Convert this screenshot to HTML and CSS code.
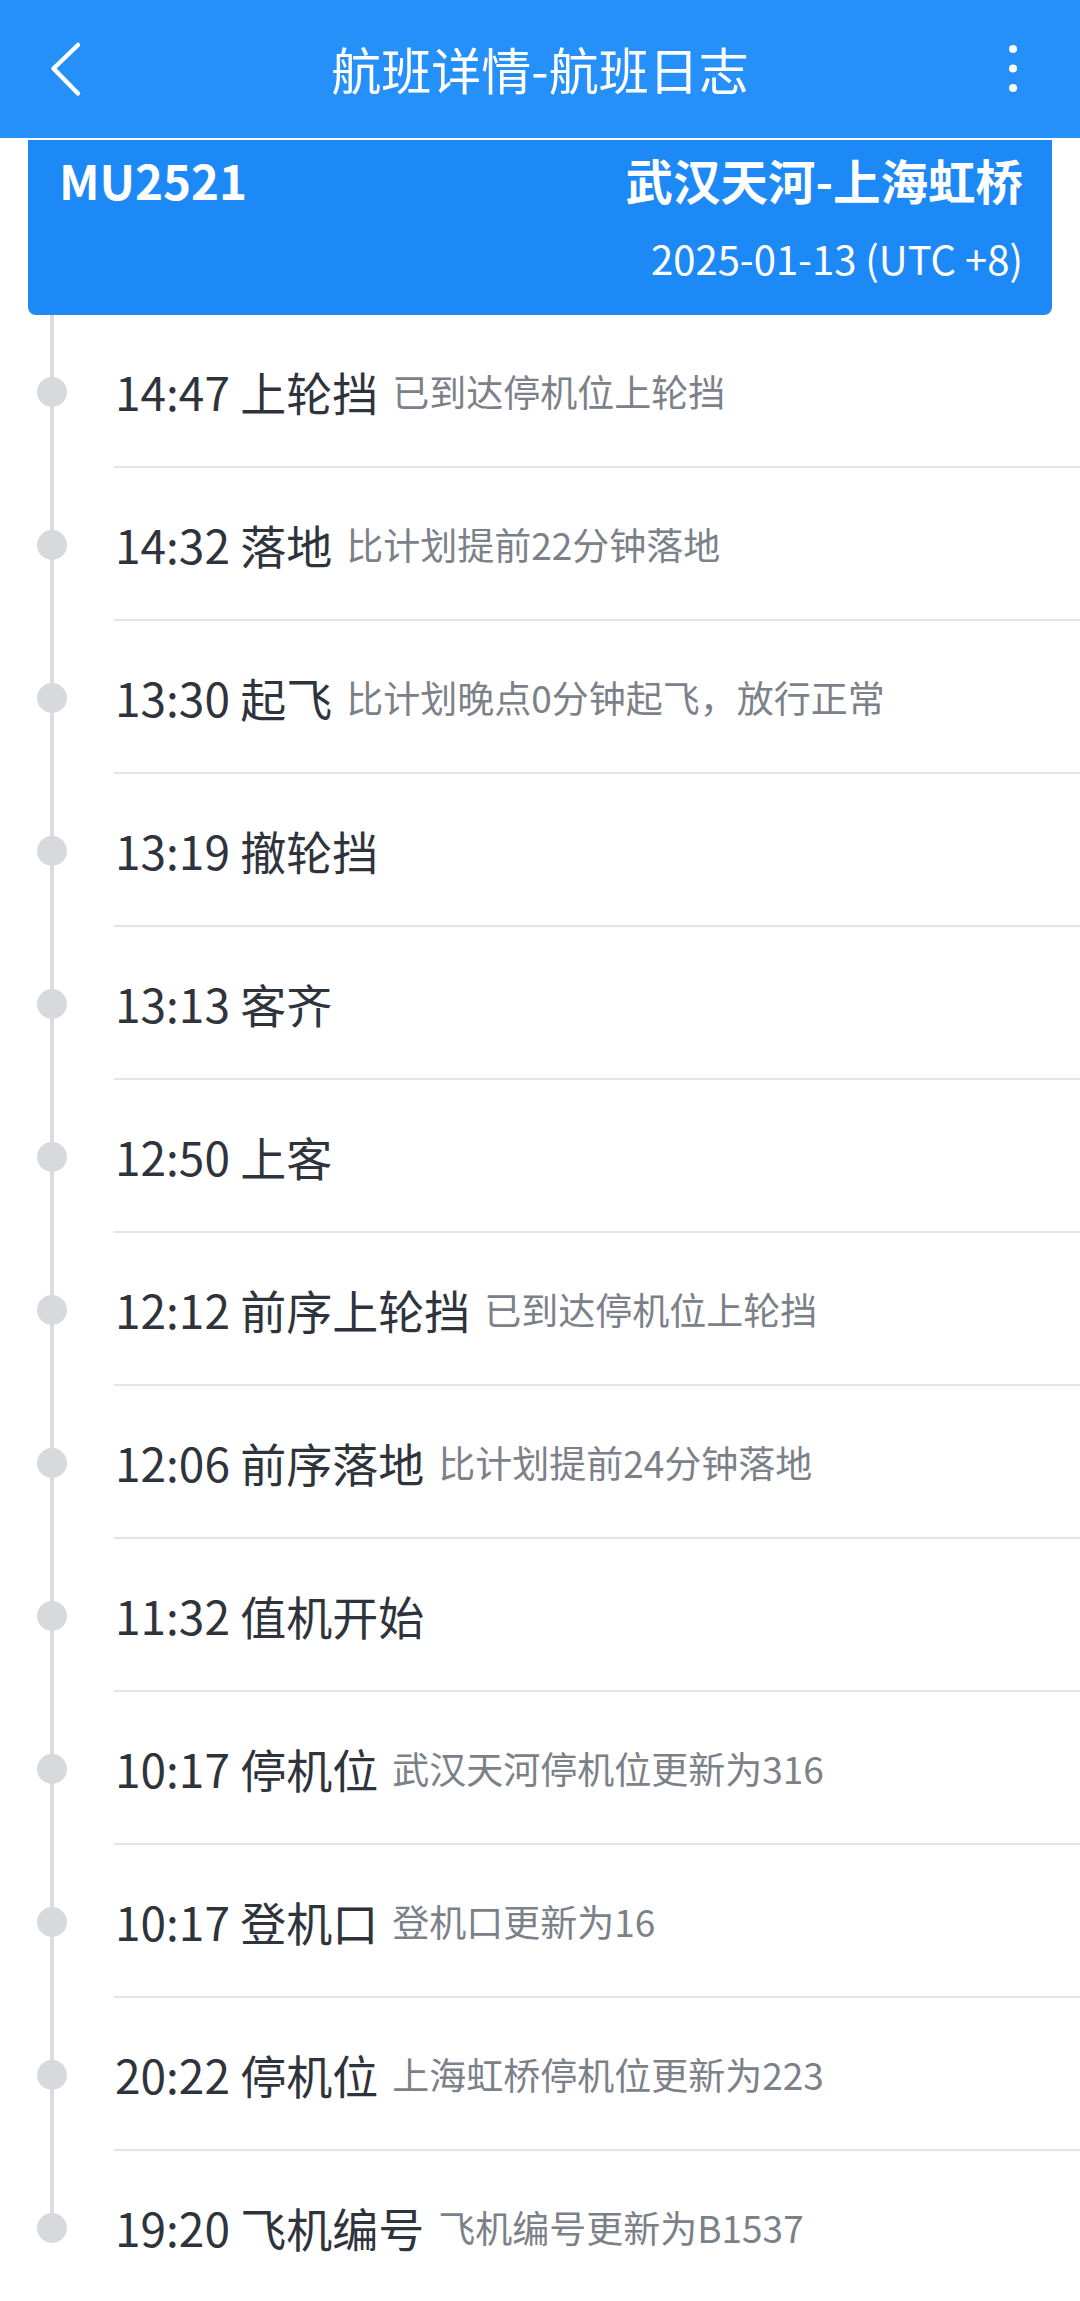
FILE: index.html
```html
<!DOCTYPE html>
<html lang="zh-CN">
<head>
  <meta charset="UTF-8" />
  <meta name="viewport" content="width=device-width, initial-scale=1.0" />
  <title>航班详情-航班日志</title>
  <link rel="stylesheet" href="styles.css">
</head>
<body>
  <div class="topbar">
    <div class="back">
      <svg width="32" height="58" viewBox="0 0 32 58"><path d="M28 5 L3.5 28.5 L28 53.5" fill="none" stroke="#fff" stroke-width="4.5" stroke-linecap="round" stroke-linejoin="round"/></svg>
    </div>
    <div class="title">航班详情-航班日志</div>
    <div class="more">
      <svg width="10" height="50" viewBox="0 0 10 50"><circle cx="5" cy="5" r="4" fill="#fff"/><circle cx="5" cy="24.5" r="4" fill="#fff"/><circle cx="5" cy="44" r="4" fill="#fff"/></svg>
    </div>
  </div>

  <div class="card">
    <div class="flight-no">MU2521</div>
    <div class="card-right">
      <div class="route">武汉天河-上海虹桥</div>
      <div class="date">2025-01-13 (UTC +8)</div>
    </div>
  </div>

  <ul class="timeline" id="timeline"></ul>

  <script>
    const logs = [
      ["14:47", "上轮挡", "已到达停机位上轮挡"],
      ["14:32", "落地", "比计划提前22分钟落地"],
      ["13:30", "起飞", "比计划晚点0分钟起飞，放行正常"],
      ["13:19", "撤轮挡", ""],
      ["13:13", "客齐", ""],
      ["12:50", "上客", ""],
      ["12:12", "前序上轮挡", "已到达停机位上轮挡"],
      ["12:06", "前序落地", "比计划提前24分钟落地"],
      ["11:32", "值机开始", ""],
      ["10:17", "停机位", "武汉天河停机位更新为316"],
      ["10:17", "登机口", "登机口更新为16"],
      ["20:22", "停机位", "上海虹桥停机位更新为223"],
      ["19:20", "飞机编号", "飞机编号更新为B1537"]
    ];

    const list = document.getElementById("timeline");
    logs.forEach(([time, name, desc]) => {
      const li = document.createElement("li");
      li.className = "log";
      li.innerHTML = `
        <div class="rail"><span class="dot"></span></div>
        <div class="log-body">
          <span class="log-main">${time} ${name}</span>
          ${desc ? `<span class="log-desc">${desc}</span>` : ""}
        </div>
      `;
      list.appendChild(li);
    });
  </script>
</body>
</html>
```

FILE: styles.css
```css
body {
  margin: 0;
  background: #fff;
  font-family: "Noto Sans CJK SC", "Noto Sans", sans-serif;
  color: #2f343c;
}

.topbar {
  height: 138px;
  background: #2590f9;
  display: grid;
  grid-template-columns: 1fr auto 1fr;
  align-items: center;
  color: #fff;
}
.back { padding-left: 50px; display: flex; }
.more { justify-self: end; padding-right: 62px; display: flex; }
.title { font-size: 50px; line-height: 1; margin-top: -2px; }

.card {
  box-sizing: border-box;
  height: 175px;
  margin: 2px 28px 0;
  padding: 12px 29px 0 31px;
  background: #1d89f6;
  border-radius: 0 0 8px 8px;
  color: #fff;
  display: flex;
  justify-content: space-between;
}
.flight-no, .route {
  font-size: 47.5px;
  font-weight: bold;
  line-height: 56px;
}
.card-right { text-align: right; }
.date {
  font-size: 40px;
  line-height: 48px;
  margin-top: 26px;
}

.timeline { list-style: none; margin: 0; padding: 0; }
.log { display: flex; height: 153px; }
.rail {
  width: 114px;
  flex-shrink: 0;
  display: flex;
  align-items: center;
  background: linear-gradient(#dcdcdf, #dcdcdf) no-repeat 50px 0 / 4px 100%;
}
.log:last-child .rail { background-size: 4px 50%; }
.dot {
  width: 30px;
  height: 30px;
  margin-left: 37px;
  border-radius: 50%;
  background: #d8d9dc;
}
.log-body {
  flex: 1;
  display: flex;
  align-items: center;
  padding-left: 1px;
  border-bottom: 2px solid #e4e4e6;
}
.log-main { font-size: 46px; }
.log-desc { font-size: 37px; color: #7c8189; margin-left: 14px; }
```
